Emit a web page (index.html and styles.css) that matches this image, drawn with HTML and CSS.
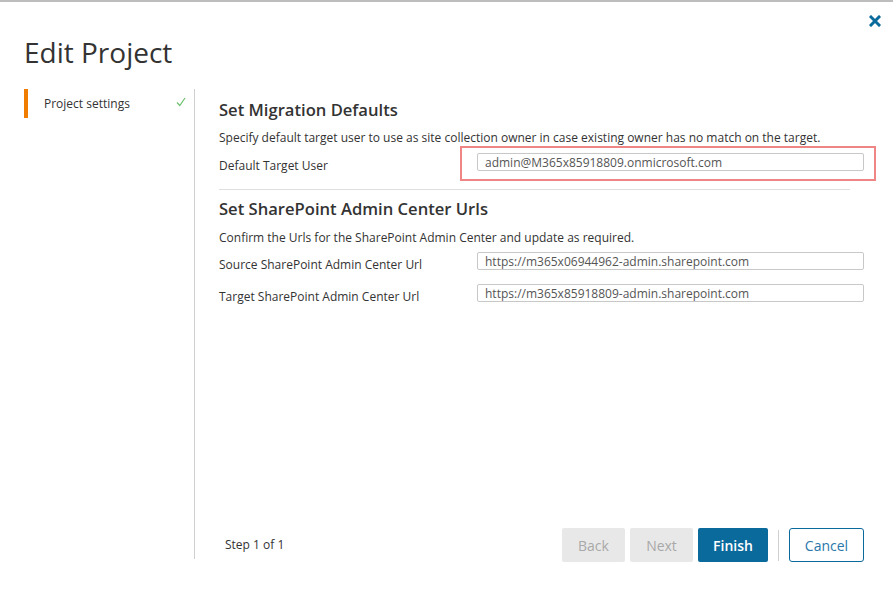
FILE: index.html
```html
<!DOCTYPE html>
<html>
<head>
<meta charset="utf-8">
<link rel="stylesheet" href="styles.css">
</head>
<body>
<div class="dialog">
  <div class="header">
    <h1 class="title">Edit Project</h1>
    <button class="close" aria-label="Close">
      <svg width="12" height="12" viewBox="0 0 12 12"><path d="M2 2 L10 10 M10 2 L2 10" stroke="#0b6a9c" stroke-width="3" stroke-linecap="square"/></svg>
    </button>
  </div>
  <div class="main">
    <div class="sidebar">
      <div class="step active">
        <span class="step-label">Project settings</span>
        <svg class="check" width="10" height="10" viewBox="0 0 10 10"><polyline points="1,5.5 3.8,8.5 9,1" fill="none" stroke="#6cc070" stroke-width="1.2"/></svg>
      </div>
    </div>
    <div class="content">
      <div class="section first">
        <h2 class="section-title">Set Migration Defaults</h2>
        <p class="desc">Specify default target user to use as site collection owner in case existing owner has no match on the target.</p>
        <div class="row">
          <label class="label">Default Target User</label>
          <input class="field" type="text" value="admin@M365x85918809.onmicrosoft.com">
          <div class="highlight"></div>
        </div>
      </div>
      <hr class="divider">
      <div class="section second">
        <h2 class="section-title">Set SharePoint Admin Center Urls</h2>
        <p class="desc">Confirm the Urls for the SharePoint Admin Center and update as required.</p>
        <div class="row">
          <label class="label">Source SharePoint Admin Center Url</label>
          <input class="field" type="text" value="https://m365x06944962-admin.sharepoint.com">
        </div>
        <div class="row">
          <label class="label">Target SharePoint Admin Center Url</label>
          <input class="field" type="text" value="https://m365x85918809-admin.sharepoint.com">
        </div>
      </div>
      <div class="footer">
        <span class="step-count">Step 1 of 1</span>
        <div class="buttons">
          <button class="btn btn-disabled">Back</button>
          <button class="btn btn-disabled">Next</button>
          <button class="btn btn-primary">Finish</button>
          <span class="sep"></span>
          <button class="btn btn-outline">Cancel</button>
        </div>
      </div>
    </div>
  </div>
</div>
</body>
</html>
```

FILE: styles.css
```css
* { box-sizing: border-box; }
html, body { margin: 0; padding: 0; background: #fff; }
body {
  font-family: "Open Sans", "Noto Sans", sans-serif;
  color: #333;
  width: 893px;
  height: 591px;
  overflow: hidden;
}
.dialog {
  position: relative;
  width: 893px;
  height: 591px;
  border-top: 2px solid #bdbdbd;
}
.header {
  height: 87px;
  padding: 31px 0 0 24px;
}
.title {
  margin: 0;
  font-size: 28px;
  font-weight: 400;
  line-height: 38px;
  color: #333;
}
.close {
  position: absolute;
  top: 12px;
  right: 11px;
  width: 14px;
  height: 14px;
  padding: 0;
  border: 0;
  background: none;
  display: flex;
  align-items: center;
  justify-content: center;
}
.main {
  display: flex;
  height: 470px;
}
.sidebar {
  width: 195px;
  border-right: 1px solid #cfcfcf;
  padding-left: 24px;
}
.step {
  display: flex;
  align-items: center;
  height: 29px;
  border-left: 4px solid #f07c00;
  padding-left: 16px;
  padding-right: 8px;
}
.step-label {
  flex: 1;
  font-size: 12px;
  color: #333;
  margin-top: 0;
}
.check { margin-top: -4px; }
.content {
  display: flex;
  flex-direction: column;
  padding-left: 24px;
  width: 670px;
}
.section-title {
  margin: 0;
  font-size: 16.6px;
  font-weight: 600;
  line-height: 22px;
  color: #333;
}
.first .section-title { margin-top: 10px; }
.second .section-title { margin-top: 8px; }
.desc {
  margin: 8px 0 0;
  font-size: 12px;
  line-height: 17px;
  color: #333;
}
.second .desc { margin-top: 9px; }
.row {
  position: relative;
  display: flex;
  align-items: flex-start;
  margin-top: 7px;
  height: 27px;
}
.second .row { margin-top: 6px; }
.second .row + .row { margin-top: 5px; }
.label {
  width: 258px;
  font-size: 12px;
  line-height: 17px;
  padding-top: 4px;
  color: #333;
}
.field {
  width: 387px;
  height: 18px;
  border: 1px solid #c8c8c8;
  border-radius: 2px;
  padding: 0 7px;
  font-family: "Open Sans", "Noto Sans", sans-serif;
  font-size: 12px;
  color: #555;
  background: #fff;
  outline: none;
}
.highlight {
  position: absolute;
  left: 241px;
  top: -7px;
  width: 416px;
  height: 35px;
  border: 2px solid #ef8585;
  pointer-events: none;
}
.divider {
  margin: 9px 0 0;
  width: 631px;
  border: 0;
  border-top: 1px solid #dedede;
  height: 0;
}
.footer {
  margin-top: auto;
  margin-bottom: -3px;
  display: flex;
  align-items: center;
  justify-content: space-between;
  width: 645px;
  padding-left: 6px;
}
.step-count {
  font-size: 12px;
  color: #333;
  margin-top: -1px;
}
.buttons {
  display: flex;
  align-items: center;
  gap: 5px;
}
.btn {
  height: 34px;
  border-radius: 2px;
  font-family: "Open Sans", "Noto Sans", sans-serif;
  font-size: 14px;
  padding: 0;
  border: 1px solid transparent;
}
.btn-disabled {
  width: 63px;
  background: #e8e8e8;
  color: #a8a8a8;
}
.btn-primary {
  width: 70px;
  background: #0b6a9c;
  color: #fff;
  font-weight: 600;
}
.sep {
  width: 1px;
  height: 31px;
  background: #d0d0d0;
  margin: 0 5px 0 5px;
}
.btn-outline {
  width: 75px;
  background: #fff;
  border: 1px solid #0b6a9c;
  color: #2a77aa;
  border-radius: 3px;
}
```
